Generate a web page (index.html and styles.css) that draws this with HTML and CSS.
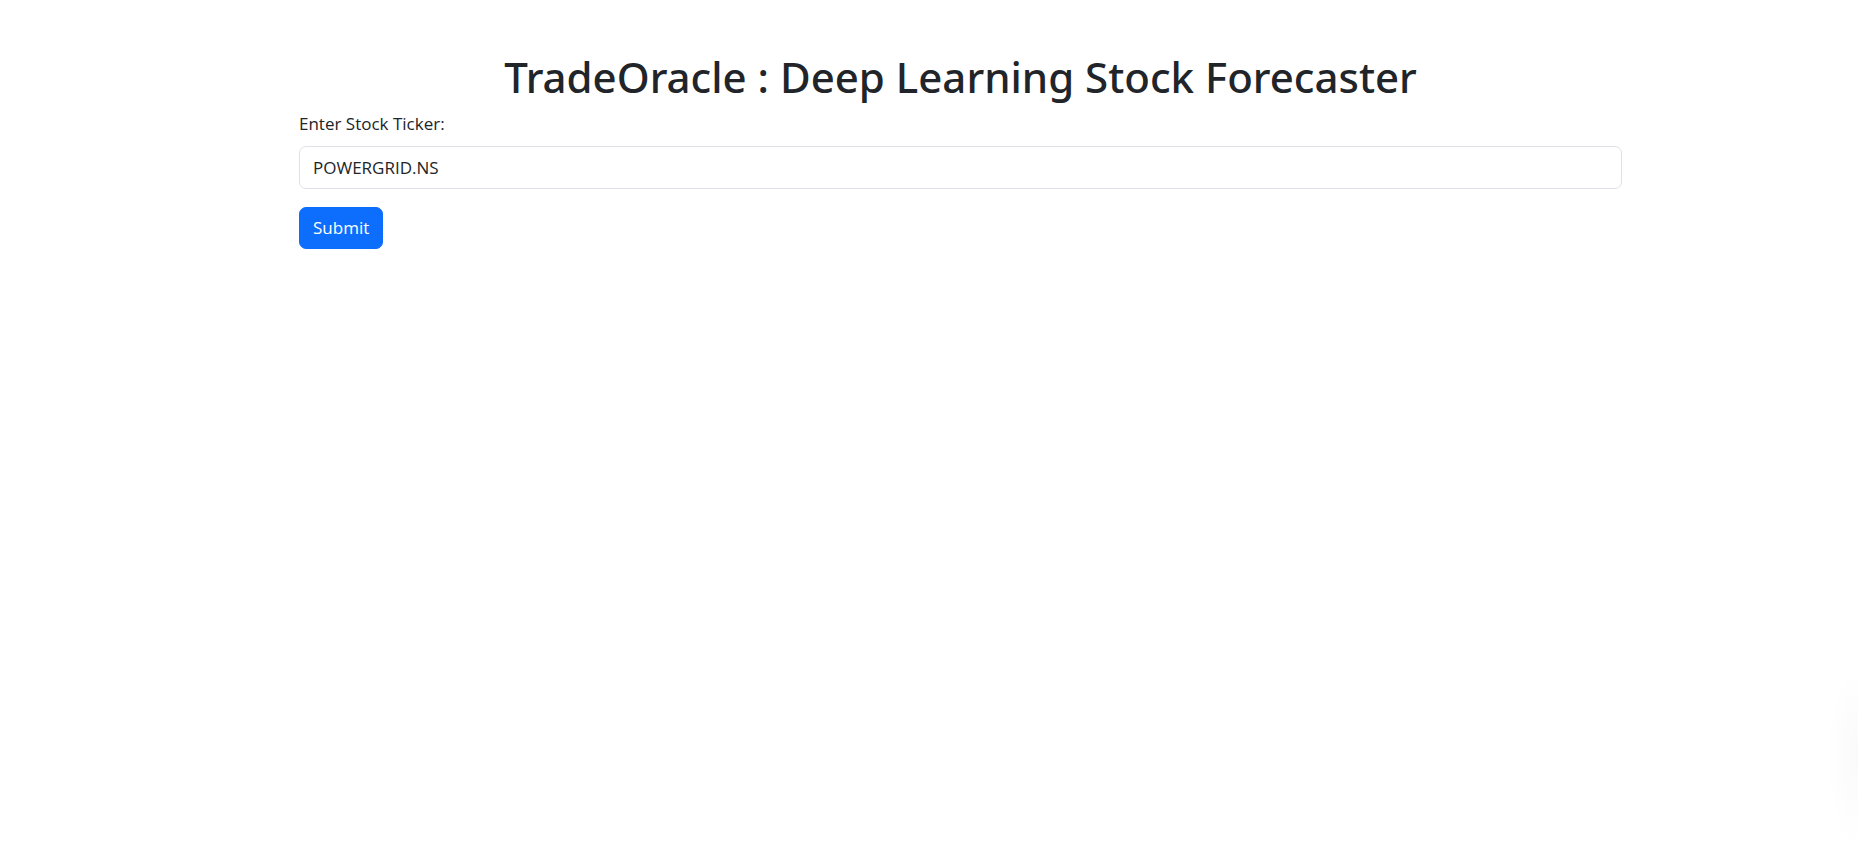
FILE: index.html
```html
<!DOCTYPE html>
<html lang="en">
<head>
<meta charset="utf-8">
<meta name="viewport" content="width=device-width, initial-scale=1">
<title>TradeOracle</title>
<link rel="stylesheet" href="styles.css">
</head>
<body>
<main class="container">
  <h1 class="title">TradeOracle : Deep Learning Stock Forecaster</h1>
  <form class="ticker-form">
    <div class="field">
      <label class="field-label" for="stock">Enter Stock Ticker:</label>
      <input class="field-input" type="text" id="stock" name="stock" value="POWERGRID.NS">
    </div>
    <button class="submit" type="submit">Submit</button>
  </form>
</main>
</body>
</html>
```

FILE: styles.css
```css
*,
*::before,
*::after {
  box-sizing: border-box;
}

body {
  min-height: 100vh;
  margin: 0;
  padding: 48px 0 0 63px;
  background:
    radial-gradient(ellipse 32px 90px at right 0 bottom 90px, #fafafa, #fff) no-repeat,
    #fff;
  color: #212529;
  font-family: "Segoe UI", "Open Sans", "Noto Sans", sans-serif;
  font-size: 17px;
  line-height: 24px;
}

.container {
  max-width: 1347px;
  margin: 0 auto;
  padding: 0 12px;
}

.title {
  margin: 0 0 6px;
  font-family: "Segoe UI", "Noto Sans", "Open Sans", sans-serif;
  font-size: 42px;
  font-weight: 500;
  line-height: 58px;
  text-align: center;
}

.field {
  margin-bottom: 18px;
}

.field-label {
  display: inline-block;
  margin-bottom: 10px;
}

.field-input {
  display: block;
  width: 100%;
  height: 43px;
  padding: 6px 13px;
  border: 1px solid #dee2e6;
  border-radius: 7px;
  background: #fff;
  color: inherit;
  font: inherit;
}

.submit {
  padding: 8px 13px;
  border: 1px solid #0d6efd;
  border-radius: 7px;
  background: #0d6efd;
  color: #fff;
  font: inherit;
}
```
